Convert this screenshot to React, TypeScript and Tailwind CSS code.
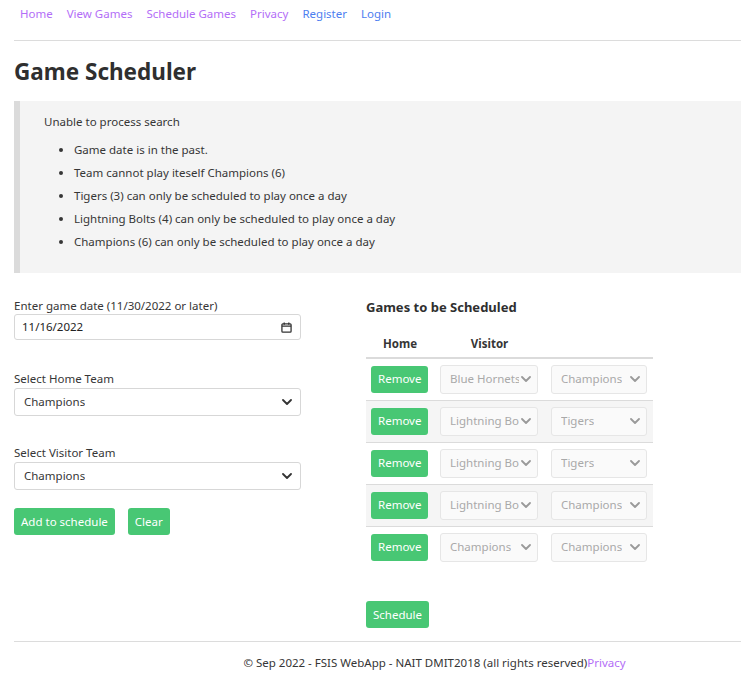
import React from 'react';

const Chevron = ({ className = '' }: { className?: string }) => (
  <svg viewBox="0 0 10 6" className={className} fill="none" stroke="currentColor" strokeWidth="1.8" strokeLinecap="round" strokeLinejoin="round">
    <path d="M1 1l4 4 4-4" />
  </svg>
);

const FakeSelect = ({ value, width, disabled = false }: { value: string; width: string; disabled?: boolean }) => (
  <div
    className={`${width} flex items-center justify-between rounded-[3px] border ${
      disabled ? 'h-[29px] border-[#e6e6e6] bg-[#fafafa] pr-[6px] text-[#a9a9a9]' : 'h-[28px] border-[#d7d7d7] bg-white pr-[8px] text-[#363636]'
    } pl-[9px]`}
  >
    <span className="overflow-hidden whitespace-nowrap">{value}</span>
    <Chevron className={`ml-[2px] w-[10px] h-[6px] shrink-0 ${disabled ? 'text-[#9a9a9a]' : 'text-[#333]'}`} />
  </div>
);

const GreenButton = ({ children, className = '' }: { children: React.ReactNode; className?: string }) => (
  <button className={`h-[27px] rounded-[3px] bg-[#48c774] px-[7px] text-white ${className}`}>{children}</button>
);

const App = () => {
  const navLinks = [
    { label: 'Home', visited: true },
    { label: 'View Games', visited: true },
    { label: 'Schedule Games', visited: true },
    { label: 'Privacy', visited: true },
    { label: 'Register', visited: false },
    { label: 'Login', visited: false },
  ];

  const errors = [
    'Game date is in the past.',
    'Team cannot play iteself Champions (6)',
    'Tigers (3) can only be scheduled to play once a day',
    'Lightning Bolts (4) can only be scheduled to play once a day',
    'Champions (6) can only be scheduled to play once a day',
  ];

  const games = [
    { home: 'Blue Hornets', visitor: 'Champions' },
    { home: 'Lightning Bolts', visitor: 'Tigers' },
    { home: 'Lightning Bolts', visitor: 'Tigers' },
    { home: 'Lightning Bolts', visitor: 'Champions' },
    { home: 'Champions', visitor: 'Champions' },
  ];

  return (
    <div className="min-h-[692px] bg-white pl-[14px] text-[11.5px] leading-[16px] text-[#363636] font-['Noto_Sans','Open_Sans',sans-serif]">
      {/* Nav */}
      <nav className="flex h-[40px] items-start gap-[14px] pl-[6px] pt-[6px]">
        {navLinks.map((l) => (
          <a key={l.label} className={l.visited ? 'text-[#b36ef7]' : 'text-[#4d7ef0]'}>
            {l.label}
          </a>
        ))}
      </nav>
      <div className="border-t border-[#dcdcdc]" />

      <h1 className="mt-[17px] text-[22.5px] font-bold leading-[28px] text-[#2f2f2f]">Game Scheduler</h1>

      {/* Error box */}
      <div className="mt-[15px] h-[172px] border-l-[6px] border-[#dbdbdb] bg-[#f4f4f4] pl-[24px] pt-[13px]">
        <p>Unable to process search</p>
        <ul className="mt-[12px] list-disc pl-[30px] marker:text-[#363636]">
          {errors.map((e) => (
            <li key={e} className="mb-[7px] leading-[16px]">
              {e}
            </li>
          ))}
        </ul>
      </div>

      <div className="mt-[25px] flex">
        {/* Left form */}
        <div className="w-[287px]">
          <label className="block">Enter game date (11/30/2022 or later)</label>
          <div className="flex h-[26px] items-center justify-between rounded-[3px] border border-[#d7d7d7] pl-[7px] pr-[8px] text-[#222]">
            <span>11/16/2022</span>
            <svg viewBox="0 0 12 12" className="h-[11px] w-[11px]" fill="none" stroke="#333" strokeWidth="1.4">
              <rect x="1" y="2" width="10" height="9" rx="1" />
              <path d="M1 4.5h10M3.5 0.5v2.5M8.5 0.5v2.5" />
            </svg>
          </div>

          <label className="mt-[31px] block">Select Home Team</label>
          <div className="mt-[1px]">
            <FakeSelect value="Champions" width="w-[287px]" />
          </div>

          <label className="mt-[29px] block">Select Visitor Team</label>
          <div className="mt-[1px]">
            <FakeSelect value="Champions" width="w-[287px]" />
          </div>

          <div className="mt-[18px] flex gap-[13px]">
            <GreenButton>Add to schedule</GreenButton>
            <GreenButton>Clear</GreenButton>
          </div>
        </div>

        {/* Right: games */}
        <div className="ml-[65px] w-[287px]">
          <h2 className="text-[13px] font-bold leading-[18px] text-[#2f2f2f]">Games to be Scheduled</h2>
          <table className="mt-[20px] w-[287px] border-collapse">
            <thead>
              <tr className="border-b-2 border-[#dbdbdb] font-bold">
                <th className="w-[68px] pb-[5px] text-center font-bold">Home</th>
                <th className="w-[111px] pb-[5px] text-center font-bold">Visitor</th>
                <th />
              </tr>
            </thead>
            <tbody>
              {games.map((g, i) => (
                <tr key={i} className={`h-[42px] ${i < games.length - 1 ? 'border-b border-[#dbdbdb]' : ''} ${i % 2 === 1 ? 'bg-[#f5f5f5]' : ''}`}>
                  <td className="pl-[5px]">
                    <GreenButton>Remove</GreenButton>
                  </td>
                  <td className="pl-[6px]">
                    <FakeSelect value={g.home} width="w-[98px]" disabled />
                  </td>
                  <td className="pl-[6px]">
                    <FakeSelect value={g.visitor} width="w-[96px]" disabled />
                  </td>
                </tr>
              ))}
            </tbody>
          </table>
          <div className="mt-[33px]">
            <GreenButton>Schedule</GreenButton>
          </div>
        </div>
      </div>

      {/* Footer */}
      <div className="mt-[13px] border-t border-[#dcdcdc]" />
      <footer className="pl-[114px] pt-[13px] text-center">
        © Sep 2022 - FSIS WebApp - NAIT DMIT2018 (all rights reserved)<a className="text-[#b36ef7]">Privacy</a>
      </footer>
    </div>
  );
};

export default App;
